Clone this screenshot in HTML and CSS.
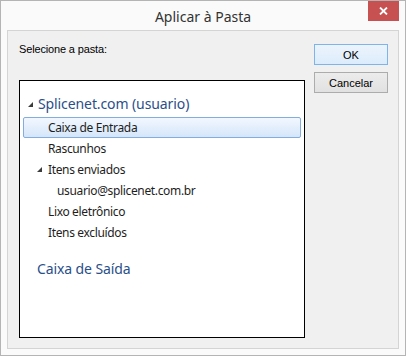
FILE: index.html
```html
<!DOCTYPE html>
<html>
<head>
	<title>Aplicar à Pasta</title>
	<link rel="stylesheet" href="styles.css">
</head>
<body>
	<div class="window">
		<div class="titlebar">
			<span class="title">Aplicar à Pasta</span>
			<button class="close">
				<svg width="9" height="8" viewBox="0 0 9 8"><path d="M1 0.5 L8 7.5 M8 0.5 L1 7.5" stroke="#fff" stroke-width="1.8"/></svg>
			</button>
		</div>
		<div class="panel">
			<div class="left">
				<div class="label">Selecione a pasta:</div>
				<div class="tree">
					<div class="account">
						<svg class="arrow" width="5" height="5" viewBox="0 0 5 5"><polygon points="5,0 5,5 0,5" fill="#3c3c3c"/></svg>
						<span>Splicenet.com (usuario)</span>
					</div>
					<div class="row level1 selected">Caixa de Entrada</div>
					<div class="row level1">Rascunhos</div>
					<div class="row level1 open">
						<svg class="arrow" width="5" height="5" viewBox="0 0 5 5"><polygon points="5,0 5,5 0,5" fill="#3c3c3c"/></svg>
						<span>Itens enviados</span>
					</div>
					<div class="row level2">usuario@splicenet.com.br</div>
					<div class="row level1">Lixo eletrônico</div>
					<div class="row level1">Itens excluídos</div>
					<div class="account outbox">Caixa de Saída</div>
				</div>
			</div>
			<div class="buttons">
				<button class="btn default">OK</button>
				<button class="btn">Cancelar</button>
			</div>
		</div>
	</div>
</body>
</html>
```

FILE: styles.css
```css
body {
	margin: 0;
	background-color: #ffffff;
}

.window {
	width: 406px;
	height: 356px;
	box-sizing: border-box;
	border: 1px solid #b4b4b4;
	background-color: #fafafa;
	display: flex;
	flex-direction: column;
}

.titlebar {
	height: 29px;
	position: relative;
	display: flex;
	align-items: center;
	justify-content: center;
}

.title {
	font-family: "Noto Sans", sans-serif;
	font-size: 14px;
	color: #333333;
	margin-top: 2px;
}

.close {
	position: absolute;
	top: 0;
	right: 6px;
	width: 31px;
	height: 20px;
	border: none;
	padding: 0;
	background-color: #c75050;
	display: flex;
	align-items: center;
	justify-content: center;
}

.panel {
	flex: 1;
	margin: 0 6px 6px 6px;
	border: 1px solid #d4d4d4;
	background-color: #f0f0f0;
	display: flex;
	padding: 12px 0 0 11px;
}

.label {
	font-family: "Liberation Sans", sans-serif;
	font-size: 11px;
	letter-spacing: -0.15px;
	color: #000000;
	height: 37px;
}

.tree {
	width: 286px;
	height: 258px;
	box-sizing: border-box;
	border: 1px solid #000000;
	background-color: #ffffff;
	padding: 10px 3px 0 3px;
	font-family: "Noto Sans", sans-serif;
}

.account {
	height: 24px;
	display: flex;
	align-items: center;
	font-size: 14px;
	letter-spacing: -0.1px;
	color: #2a4f8a;
	padding-left: 5px;
	margin-bottom: 2px;
}

.account .arrow {
	margin-right: 5px;
	margin-top: 2px;
}

.outbox {
	margin-top: 13px;
	padding-left: 14px;
}

.row {
	height: 21px;
	box-sizing: border-box;
	display: flex;
	align-items: center;
	font-size: 12px;
	letter-spacing: -0.35px;
	color: #1e1e1e;
	border: 1px solid transparent;
	border-radius: 2px;
}

.level1 {
	padding-left: 24px;
}

.level2 {
	padding-left: 33px;
}

.open {
	padding-left: 13px;
}

.open .arrow {
	margin-right: 6px;
}

.selected {
	border-color: #84acdd;
	background: linear-gradient(#f2f7fe, #d5e6fa);
}

.buttons {
	display: flex;
	flex-direction: column;
	gap: 7px;
	margin-left: 9px;
	padding-top: 1px;
}

.btn {
	width: 74px;
	height: 21px;
	font-family: "Liberation Sans", sans-serif;
	font-size: 11px;
	color: #000000;
	border: 1px solid #acacac;
	background: linear-gradient(#ececec, #e1e1e1);
	padding: 0;
}

.default {
	border-color: #7eb4ea;
	background: linear-gradient(#ecf4fc, #dcecfc);
}
```
